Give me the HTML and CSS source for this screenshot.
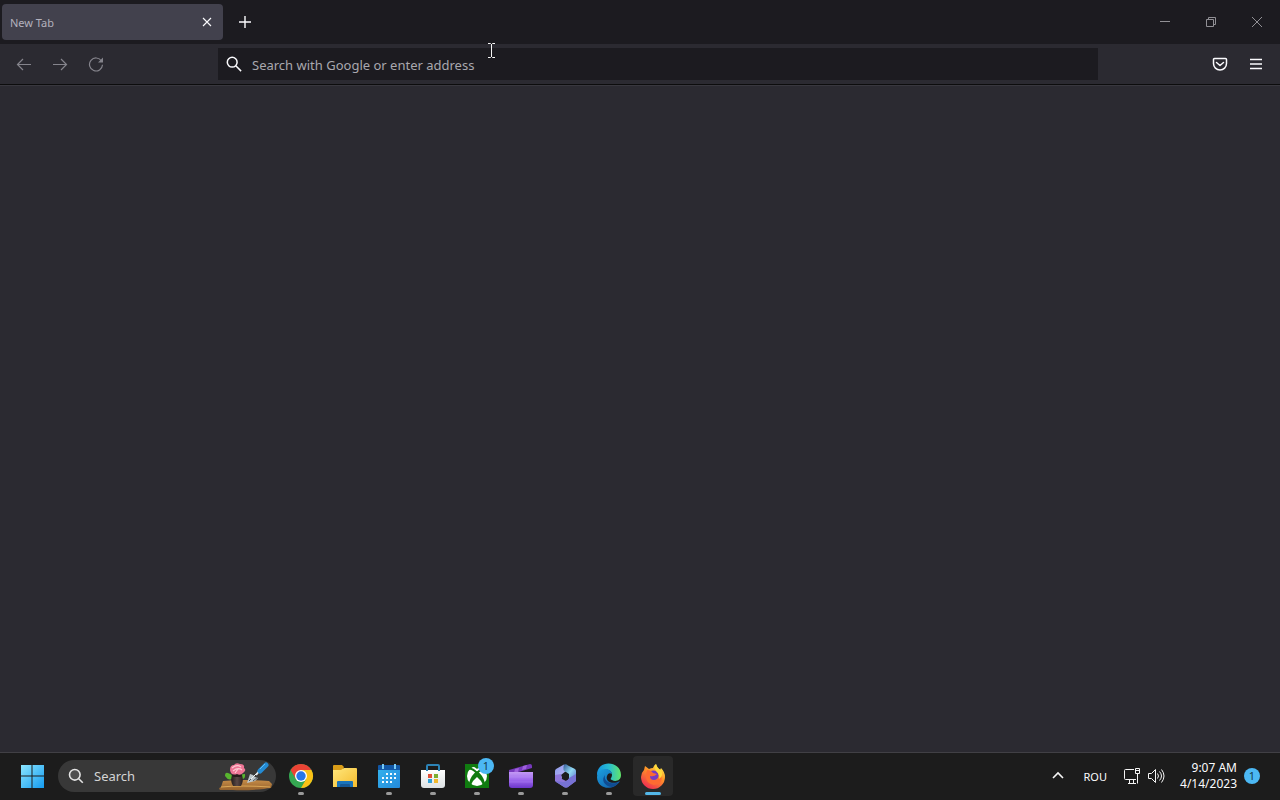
FILE: index.html
```html
<!DOCTYPE html>
<html lang="en">
<head>
<meta charset="utf-8">
<meta name="viewport" content="width=device-width, initial-scale=1">
<title>New Tab</title>
<link rel="stylesheet" href="styles.css">
</head>
<body>
<header class="titlebar">
  <div class="tab">
    <span class="tab-label">New Tab</span>
    <button class="tab-close" aria-label="Close tab"><svg width="10" height="10" viewBox="0 0 10 10"><path d="M1 1l8 8M9 1l-8 8" stroke="#fbfbfe" stroke-width="1.1"/></svg></button>
  </div>
  <button class="new-tab" aria-label="New tab"><svg width="12" height="12" viewBox="0 0 12 12"><path d="M6 0v12M0 6h12" stroke="#fbfbfe" stroke-width="1.4"/></svg></button>
  <div class="window-controls">
    <button aria-label="Minimize"><svg width="10" height="10" viewBox="0 0 10 10"><path d="M0 4.500h10"/></svg></button>
    <button aria-label="Restore"><svg width="10" height="10" viewBox="0 0 10 10"><path d="M.5 2.500h7v7h-7zM2.500 2.500v-2h7v7h-2"/></svg></button>
    <button aria-label="Close"><svg width="10" height="10" viewBox="0 0 10 10"><path d="M0 0l10 10M10 0L0 10"/></svg></button>
  </div>
</header>
<nav class="toolbar" aria-label="Navigation">
  <button class="tool dim" aria-label="Back"><svg width="16" height="16" viewBox="0 0 16 16"><path d="M15 8.500H1.500M7 3L1.500 8.500 7 14"/></svg></button>
  <button class="tool dim" aria-label="Forward"><svg width="16" height="16" viewBox="0 0 16 16"><path d="M1 8.500h13.500M9 3l5.500 5.500L9 14"/></svg></button>
  <button class="tool dim" aria-label="Reload"><svg width="16" height="16" viewBox="0 0 16 16"><path d="M13.500 5A6.500 6.500 0 1 0 14.500 8.800"/><path d="M15 1.500v5H10z" fill="#85848c" stroke="none"/></svg></button>
  <label class="urlbar">
    <svg width="16" height="16" viewBox="0 0 16 16"><circle cx="6.200" cy="6.200" r="4.900"/><path d="M9.800 9.800l5.300 5.300"/></svg>
    <input type="text" aria-label="Address" placeholder="Search with Google or enter address">
  </label>
  <button class="tool" aria-label="Save to Pocket"><svg width="16" height="16" viewBox="0 0 16 16"><path d="M2.500 2.500h11a1 1 0 0 1 1 1v4a6.500 6.500 0 0 1-13 0v-4a1 1 0 0 1 1-1zM4.500 6.500L8 9.500l3.500-3" stroke-linecap="round" stroke-linejoin="round" stroke-width="1.500"/></svg></button>
  <button class="tool" aria-label="Menu"><svg width="16" height="16" viewBox="0 0 16 16"><path d="M2 3.500h12M2 8h12M2 12.500h12" stroke-width="1.400"/></svg></button>
</nav>
<main class="page"></main>
<footer class="taskbar">
  <button class="task" aria-label="Start"><svg width="24" height="24" viewBox="0 0 24 24"><defs><linearGradient id="win" x1="0" y1="0" x2="1" y2="1"><stop stop-color="#8be6ff"/><stop offset="1" stop-color="#149bf0"/></linearGradient></defs><path d="M1 1h10.500v10.500H1zM12.500 1H24v10.500H12.500zM1 12.500h10.500V24H1zM12.500 12.500H24V24H12.500z" fill="url(#win)"/></svg></button>
  <label class="search">
    <svg class="search-icon" width="16" height="16" viewBox="0 0 16 16"><circle cx="6.800" cy="6.800" r="5.300" fill="#505050"/><path d="M10.700 10.700l4.100 4.100"/></svg>
    <input type="text" aria-label="Search" placeholder="Search">
    <svg width="58" height="30" viewBox="0 0 58 30">
      <defs><linearGradient id="wood" x1="0" y1="0" x2="0" y2="1"><stop stop-color="#c58c48"/><stop offset="1" stop-color="#94602b"/></linearGradient><linearGradient id="pot"><stop stop-color="#241d1c"/><stop offset=".5" stop-color="#594745"/><stop offset="1" stop-color="#2a2120"/></linearGradient></defs>
      <path d="M5 20q22-2 46 0l3 3-1 4q-4 0-7 1-20 2-31 1H2q-2-2 1-3z" fill="url(#wood)"/>
      <path d="M3 26q20-2 49 0" fill="none" stroke="#dca858"/>
      <path d="M7 15q0-4 3-3 4 1 5 5-4 4-8-2zM22 17q0-4 5-4 1 6-5 5z" fill="#58b52e"/>
      <path d="M14 14h10q2 6-1 11h-8q-3-5-1-11z" fill="url(#pot)"/>
      <ellipse cx="19" cy="14.500" rx="5" ry="1.500" fill="#271b1b"/>
      <path d="M12 9q0-5 4-5 2-3 6-1 5 0 4 4 3 2-1 5-3 3-6 1-6 2-7-4z" fill="#ed7595"/>
      <path d="M14 7q5-4 9-1M15 10q5-4 9-1M17 12l3-4" fill="none" stroke="#ffc9d2" stroke-width="1.200"/>
      <path d="M29 22l3-9 3 1 2 2 3 1-3 3z" fill="#bcc6cb"/>
      <path d="M31 20l5-5M35 20l5-4" stroke="#4b555c"/><path d="M33 18l7-7" stroke="#eef3f5"/>
      <path d="M38 14l4-5" stroke="#dce2e6" stroke-width="2"/><path d="M42 10l6-6" stroke="#248bd4" stroke-width="5" stroke-linecap="round"/><path d="M42 8l5-5" stroke="#63bdf3"/>
    </svg>
  </label>
  <div class="apps">
    <button class="task running" aria-label="Google Chrome"><svg width="26" height="26" viewBox="0 0 26 26"><circle cx="13" cy="13" r="12" fill="#35a852"/><path d="M23.400 7H13l5.200 9L13 25A12 12 0 0 0 23.400 7z" fill="#fbc116"/><path d="M2.600 7A12 12 0 0 1 23.400 7H13L7.800 16z" fill="#ea4335"/><circle cx="13" cy="13" r="6" fill="#fff"/><circle cx="13" cy="13" r="4.700" fill="#2876e8"/></svg></button>
    <button class="task" aria-label="File Explorer"><svg width="26" height="26" viewBox="0 0 26 26"><defs><linearGradient id="folder" x1="0" y1="0" x2="1" y2="1"><stop stop-color="#ffe77c"/><stop offset="1" stop-color="#f5bb2d"/></linearGradient></defs><path d="M1 3q0-1 1-1h8l2 2-2 4H1z" fill="#d99d18"/><path d="M1 7h8l3-2h12q1 0 1 1v18H1z" fill="url(#folder)"/><path d="M5 24v-5q0-1 1-1h14q1 0 1 1v5z" fill="#1973ba"/><path d="M8 24v-2q0-1 1-1h8q1 0 1 1v2z" fill="#155795"/></svg></button>
    <button class="task running" aria-label="Calendar"><svg width="26" height="26" viewBox="0 0 26 26"><defs><linearGradient id="cal" x1="0" y1="0" x2="1" y2="1"><stop stop-color="#35b5ee"/><stop offset="1" stop-color="#2389db"/></linearGradient></defs><path d="M2 3h22v21q0 1-1 1H3q-1 0-1-1z" fill="url(#cal)"/><path d="M2 3q0-1 1-1h20q1 0 1 1v4H2z" fill="#1157a6"/><path d="M7 1v5M19 1v5" stroke="#77caf4" stroke-width="2"/><path d="M10 11h10M6 15h14M6 19h10" stroke="#f3fbff" stroke-width="2" stroke-dasharray="2 2"/></svg></button>
    <button class="task running" aria-label="Microsoft Store"><svg width="26" height="26" viewBox="0 0 26 26"><defs><linearGradient id="store" x1="0" y1="0" x2="0" y2="1"><stop stop-color="#fff"/><stop offset="1" stop-color="#dce1e3"/></linearGradient></defs><path d="M1 7h24v15q0 3-3 3H4q-3 0-3-3z" fill="url(#store)"/><path d="M7 8V3q0-1 1-1h10q1 0 1 1v5" fill="none" stroke="#2c83b6" stroke-width="2"/><path d="M8 11h4v4H8z" fill="#df4f37"/><path d="M14 11h4v4h-4z" fill="#7bae31"/><path d="M8 16h4v4H8z" fill="#2ca0d8"/><path d="M14 16h4v4h-4z" fill="#f1b82c"/></svg></button>
    <button class="task running" aria-label="Xbox, 1 notification"><svg width="26" height="26" viewBox="0 0 26 26"><path d="M1 1h24v24H1z" fill="#107c10"/><circle cx="13" cy="13" r="10" fill="#fff"/><path d="M7 4q3-1 6 2 3-3 6-2-3-2-6-2T7 4zM13 8q6 4 8 12l-2 2q-2-5-6-8-4 3-6 8l-2-2q2-8 8-12z" fill="#107c10"/><path d="M5 6q3-1 8 4 5-5 8-4" fill="none" stroke="#107c10" stroke-width="2"/></svg><span class="badge app-badge">1</span></button>
    <button class="task running" aria-label="Clipchamp"><svg width="26" height="26" viewBox="0 0 26 26"><defs><linearGradient id="clip" x1="0" y1="0" x2="0" y2="1"><stop stop-color="#c39af5"/><stop offset=".5" stop-color="#9d67ec"/><stop offset="1" stop-color="#6c36ca"/></linearGradient></defs><path d="M1 7L22 1q2 0 2 2v2L4 11H1z" fill="#7739bd"/><path d="M7 6l4-1-1 4-4 1zM15 3l4-1-1 4-4 1z" fill="#9e60dc"/><path d="M1 9h24v13q0 3-3 3H4q-3 0-3-3z" fill="url(#clip)"/><path d="M1 14h24M1 19h24" stroke="#c49bff" stroke-opacity=".3"/></svg></button>
    <button class="task running" aria-label="Microsoft 365"><svg width="26" height="26" viewBox="0 0 26 26"><defs><linearGradient id="m1" x1="0" y1="0" x2="1" y2="1"><stop stop-color="#8b9be9"/><stop offset="1" stop-color="#c0b7fa"/></linearGradient><linearGradient id="m2" x1="0" y1="0" x2="1" y2="1"><stop stop-color="#315894"/><stop offset=".5" stop-color="#90d8f1"/><stop offset="1" stop-color="#5e72cc"/></linearGradient></defs><path d="M12 1.500L4 6q-1 1-1 2v10l7-3-1-3 5-4z" fill="url(#m1)"/><path d="M12 1.500q2-1 4 1L23 6q1 1 1 2v10l-7-3V11l-3-2q-4-1-2-7.500z" fill="url(#m2)"/><path d="M3 12l6-1 1 5 4 2 3-2h7v2l-8 6q-2 1-4 0l-8-5q-1-1-1-2z" fill="#9078db"/><path d="M3 18l9 1 4-2 1-2 7-4v7l-8 6q-2 1-4 0z" fill="#7772d4"/></svg></button>
    <button class="task running" aria-label="Microsoft Edge"><svg width="26" height="26" viewBox="0 0 26 26"><defs><linearGradient id="edge" x1="0" y1="0" x2="1" y2="0"><stop stop-color="#1594e2"/><stop offset=".5" stop-color="#28bdd0"/><stop offset="1" stop-color="#62e569"/></linearGradient><linearGradient id="edge2" x1="0" y1="0" x2="1" y2="1"><stop stop-color="#1ba0df"/><stop offset="1" stop-color="#1159a7"/></linearGradient></defs><path d="M1 13C0-4 25-3 25 12c0 6-6 7-9 5-3-1 0-2 0-5 0-7-11-7-15 1z" fill="url(#edge)"/><path d="M1 14q1-8 8-8 6 0 7 5-4-2-5 2c-2 6 6 9 13 5-7 11-23 8-23-4z" fill="url(#edge2)"/><path d="M9 12c-4 5-1 11 7 12 3-1 5-2 7-5-5 3-16 1-14-7z" fill="#104c91"/></svg></button>
    <button class="task running active" aria-label="Firefox"><svg width="26" height="26" viewBox="0 0 26 26"><defs><linearGradient id="fox" x1=".8" y1="0" x2=".2" y2="1"><stop stop-color="#fff34c"/><stop offset=".4" stop-color="#ff9427"/><stop offset="1" stop-color="#ed2455"/></linearGradient></defs><path d="M4 7l1-4 4 3q2-1 4-1 1-3 3-4 1 4 4 6l1-2q4 4 4 9a12 12 0 0 1-24 0q0-4 3-7z" fill="url(#fox)"/><circle cx="13.500" cy="12.500" r="5" fill="#773cc2"/><path d="M7 7q4 0 6 3l4 1q-3 3-7 2 0 4 4 4 7 0 6-7 5 11-6 12Q3 20 7 7z" fill="#ff6b31"/><path d="M16 1q-3 4 1 8 3 3 2 7 5-3 2-9-4-2-5-6z" fill="#ffda3b"/></svg></button>
  </div>
  <div class="tray">
    <button class="tray-button" aria-label="Show hidden icons"><svg width="12" height="12" viewBox="0 0 12 12"><path d="M1 8l5-5 5 5" stroke-width="1.600"/></svg></button>
    <button class="tray-button language">ROU</button>
    <button class="tray-button system" aria-label="Network and volume">
      <svg width="18" height="18" viewBox="0 0 18 18"><path d="M11 2.500H2.500q-1 0-1 1v8q0 1 1 1H13M5 16.500h8M6.500 12.500v4M10.500 12.500v4M12.500 1.500h4v5h-4zM14.500 6.500v10M13 3.500h3"/></svg>
      <svg width="18" height="18" viewBox="0 0 18 18"><path d="M1.500 6.500h3l4-4v13l-4-4h-3zM10.500 6.500q2 2.500 0 5M12.500 4.500q4 4.500 0 9M14.500 2.500q5 6.500 0 13" stroke-linejoin="round"/></svg>
    </button>
    <button class="tray-button clock"><span>9:07 AM</span><span>4/14/2023</span></button>
    <button class="badge" aria-label="1 notification">1</button>
  </div>
</footer>
<svg class="pointer" width="9" height="17" viewBox="0 0 9 17" aria-hidden="true"><path d="M1 1.500h2.500l1 1 1-1H8M1 15.500h2.500l1-1 1 1H8M4.500 2v13" fill="none" stroke="#f5f5f5"/></svg>
</body>
</html>
```
FILE: styles.css
```css
* { box-sizing: border-box; }
body {
  margin: 0;
  min-height: 100vh;
  display: flex;
  flex-direction: column;
  background: #2b2a31;
  color: #fbfbfe;
  font-family: "Noto Sans", "Open Sans", sans-serif;
  font-size: 12px;
}
button, input {
  margin: 0;
  padding: 0;
  border: 0;
  background: none;
  color: inherit;
  font: inherit;
}
button {
  display: flex;
  align-items: center;
  justify-content: center;
}
svg { flex: none; }

.titlebar {
  display: flex;
  align-items: center;
  height: 44px;
  padding-left: 2px;
  background: #1c1b20;
}
.tab {
  display: flex;
  align-items: center;
  justify-content: space-between;
  width: 221px;
  height: 36px;
  padding: 0 4px 0 8px;
  border-radius: 4px;
  background: #42414d;
}
.tab-label { color: #b3b1bd; font-size: 11px; }
.tab-close { width: 24px; height: 24px; }
.new-tab { width: 36px; height: 36px; margin-left: 4px; }
.window-controls { display: flex; margin-left: auto; }
.window-controls button { width: 46px; height: 44px; }
.window-controls path { fill: none; stroke: #919095; }

.toolbar {
  display: flex;
  align-items: center;
  height: 41px;
  padding: 0 6px;
  border-bottom: 1px solid #0c0c0d;
  background: #2b2a31;
}
.tool { width: 36px; height: 36px; }
.tool svg { fill: none; stroke: #fbfbfe; }
.tool.dim svg { stroke: #85848c; stroke-width: 1.2; }
.urlbar {
  flex: 1;
  min-width: 0;
  display: flex;
  align-items: center;
  gap: 10px;
  height: 32px;
  margin: 0 104px;
  padding: 0 8px;
  background: #1c1b20;
}
.urlbar svg { fill: none; stroke: #fbfbfe; stroke-width: 1.5; }
.urlbar input, .search input { flex: 1; min-width: 0; outline: none; }
.urlbar input { padding-top: 2px; font-size: 13px; }
.urlbar input::placeholder { color: #a9a8ae; opacity: 1; }

.page {
  flex: 1;
  border-top: 1px solid #38373e;
  background: #2b2a31;
}

.taskbar {
  display: flex;
  align-items: center;
  height: 48px;
  padding: 0 12px 1px;
  border-top: 1px solid #414045;
  background: #1c1c1c;
}
.task {
  position: relative;
  width: 40px;
  height: 40px;
  border-radius: 4px;
}
.apps { display: flex; gap: 4px; margin-left: 5px; }
.running::after {
  content: "";
  position: absolute;
  bottom: 1px;
  left: 17px;
  width: 6px;
  height: 3px;
  border-radius: 2px;
  background: #9a9a9a;
}
.active { background: #292929; }
.active::after { left: 12px; width: 16px; background: #53b7e8; }
.search {
  display: flex;
  align-items: center;
  width: 218px;
  height: 32px;
  margin-left: 6px;
  padding-left: 10px;
  border-radius: 16px;
  background: #383838;
}
.search-icon { margin-right: 10px; fill: none; stroke: #e4e4e4; stroke-width: 1.6; }
.search input { font-size: 13px; }
.search input::placeholder { color: #d4d4d4; opacity: 1; }
.badge {
  width: 16px;
  height: 16px;
  border-radius: 50%;
  background: #4cb8f4;
  color: #12384d;
  font-size: 11px;
  line-height: 16px;
  text-align: center;
}
.app-badge { position: absolute; top: 2px; right: 3px; }
.tray {
  display: flex;
  align-items: center;
  margin-left: auto;
  padding-right: 8px;
}
.tray-button { height: 40px; }
.tray-button svg { fill: none; stroke: #f5f5f5; }
.language { margin-left: 20px; font-size: 11px; }
.system { gap: 6px; margin-left: 16px; }
.clock {
  flex-direction: column;
  align-items: flex-end;
  margin: 0 7px 0 15px;
  font-size: 12px;
  line-height: 16px;
}
.pointer { position: absolute; left: 487px; top: 42px; pointer-events: none; }
```
